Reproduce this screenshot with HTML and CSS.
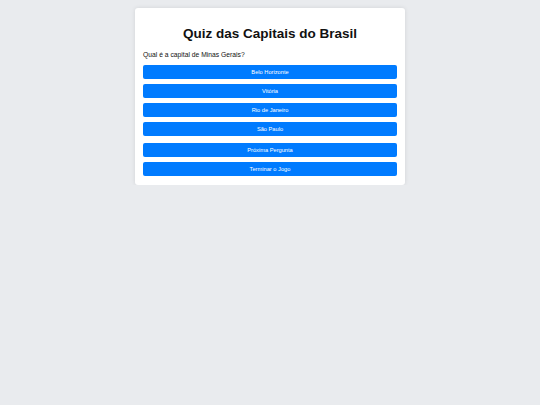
FILE: index.html
```html
<!DOCTYPE html>
<html lang="pt-BR">
<head>
    <meta charset="UTF-8">
    <meta name="viewport" content="width=device-width, initial-scale=1.0">
    <title>Quiz das Capitais do Brasil</title>
    <link rel="stylesheet" href="styles.css">
</head>
<body>
    <div class="quiz-container">
        <h1>Quiz das Capitais do Brasil</h1>
        <p id="question">Qual é a capital de Minas Gerais?</p>
        <div id="answers">
            <button class="answer-btn">Belo Horizonte</button>
            <button class="answer-btn">Vitória</button>
            <button class="answer-btn">Rio de Janeiro</button>
            <button class="answer-btn">São Paulo</button>
        </div>
        <div class="controls">
            <button id="nextButton">Próxima Pergunta</button>
            <button id="endButton">Terminar o Jogo</button>
        </div>
    </div>
</body>
</html>
```

FILE: styles.css
```css
body {
    font-family: 'Liberation Sans', Arial, sans-serif;
    background-color: #e9ebee;
    margin: 0;
    padding: 8px 0 0;
}
.quiz-container {
    width: 254px;
    margin: 0 auto;
    background-color: #fff;
    border-radius: 3px;
    padding: 8px 8px 8.6px;
    box-shadow: 0 0 4px rgba(0, 0, 0, 0.1);
}
.quiz-container h1 {
    font-size: 13.5px;
    line-height: 15.5px;
    text-align: center;
    color: #111;
    margin: 10px 0 9.3px;
}
#question {
    font-size: 6.75px;
    line-height: 8px;
    color: #111;
    margin: 0 0 6.2px;
}
#answers, .controls {
    display: flex;
    flex-direction: column;
    gap: 4.6px;
}
.controls {
    margin-top: 6.6px;
}
button {
    display: block;
    width: 100%;
    height: 14.4px;
    padding: 0;
    font-family: inherit;
    font-size: 5.7px;
    color: #fff;
    background-color: #007bff;
    border: none;
    border-radius: 2px;
    cursor: pointer;
}
button:hover {
    background-color: #0069d9;
}
```
